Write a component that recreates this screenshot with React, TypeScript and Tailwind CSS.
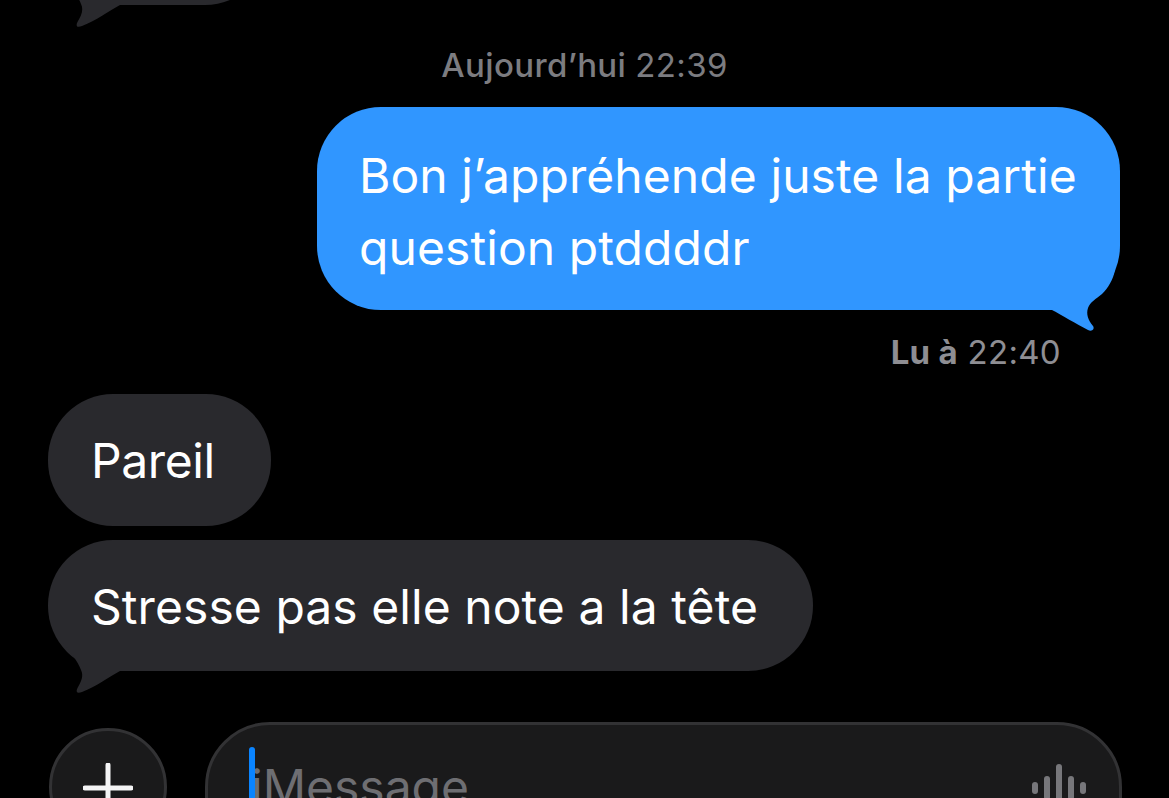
const font = { fontFamily: 'Inter, "Liberation Sans", sans-serif' };

function LeftTail() {
  return (
    <svg className="absolute left-0 bottom-[-24px] w-[80px] h-[75px]" viewBox="0 0 80 75">
      <path d="M80 51 L72 51 C62 56 48 67 34 72 C29 74 27.500 72 29.500 68 C33 62 36 56 33 50 C30 42 22 30 12 20 L80 20 Z" fill="#29292d" />
    </svg>
  );
}

function RightTail() {
  return (
    <svg className="absolute right-0 bottom-[-25px] w-[80px] h-[85px]" viewBox="0 0 80 85">
      <path d="M0 60 L12 60 C22 65 36 74 48 80 C52 82 55 79 53 76 C48 70 46 64 48 58 C50 52 56 49 62 44 C68 38 73 30 75 20 L0 20 Z" fill="#3096ff" />
    </svg>
  );
}

export default function App() {
  return (
    <div className="w-[1169px] h-[798px] overflow-hidden bg-black flex flex-col text-white" style={font}>
      <div className="relative ml-[48px] w-[222px] h-[131px] mt-[-126px] shrink-0 rounded-[65px] bg-[#29292d]">
        <LeftTail />
      </div>

      <div className="mt-[42px] h-[36px] leading-[36px] text-center text-[33px] font-medium text-[#7c7c80] tracking-[0.35px] shrink-0">
        Aujourd’hui <span className="font-normal">22:39</span>
      </div>

      <div className="mt-[24px] mr-[49px] self-end relative w-[803px] h-[203px] shrink-0 rounded-[64px] bg-[#3096ff] px-[42px] py-[33px] text-[48px] leading-[72px] tracking-[0.08px] whitespace-nowrap">
        <RightTail />
        <div className="relative">Bon j’appréhende juste la partie</div>
        <div className="relative">question ptddddr</div>
      </div>

      <div className="mt-[24px] mr-[108px] self-end h-[36px] leading-[36px] text-[33px] text-[#8e8e93] tracking-[0.3px] shrink-0">
        <span className="font-bold">Lu à</span> 22:40
      </div>

      <div className="mt-[24px] ml-[48px] w-[223px] h-[132px] shrink-0 rounded-[65px] bg-[#29292d] pl-[43px] pt-[2px] flex items-center text-[48px] tracking-[-0.4px]">
        Pareil
      </div>

      <div className="mt-[14px] ml-[48px] relative w-[765px] h-[131px] shrink-0 rounded-[65px] bg-[#29292d] pl-[43px] pt-[2px] flex items-center text-[48px] tracking-[0.06px] whitespace-nowrap">
        <LeftTail />
        <span className="relative">Stresse pas elle note a la tête</span>
      </div>

      <div className="mt-[51px] ml-[49px] mr-[47px] flex items-start gap-[38px] shrink-0">
        <div className="mt-[6px] w-[118px] h-[118px] shrink-0 rounded-full bg-[#1a1a1b] border-[3px] border-[#323234] flex items-center justify-center">
          <svg className="w-[50px] h-[50px] mt-[2px]" viewBox="0 0 50 50">
            <path d="M25 2 V48 M2 25 H48" stroke="#f4f4f5" strokeWidth="5" strokeLinecap="round" />
          </svg>
        </div>
        <div className="relative h-[140px] flex-1 rounded-[65px] bg-[#1a1a1b] border-[3px] border-[#323234] pl-[43px] pt-[26px] text-[48px] leading-[72px] text-[#6e6e72]">
          <div className="absolute left-[41px] top-[22px] w-[6px] h-[80px] rounded-full bg-[#0a84ff]" />
          iMessage
          <div className="absolute right-[33px] top-[39px] flex items-center gap-[6px] h-[48px]">
            <div className="w-[6px] h-[12px] rounded-full bg-[#77777b]" />
            <div className="w-[6px] h-[24px] rounded-full bg-[#77777b]" />
            <div className="w-[6px] h-[48px] rounded-full bg-[#77777b]" />
            <div className="w-[6px] h-[24px] rounded-full bg-[#77777b]" />
            <div className="w-[6px] h-[12px] rounded-full bg-[#77777b]" />
          </div>
        </div>
      </div>
    </div>
  );
}
